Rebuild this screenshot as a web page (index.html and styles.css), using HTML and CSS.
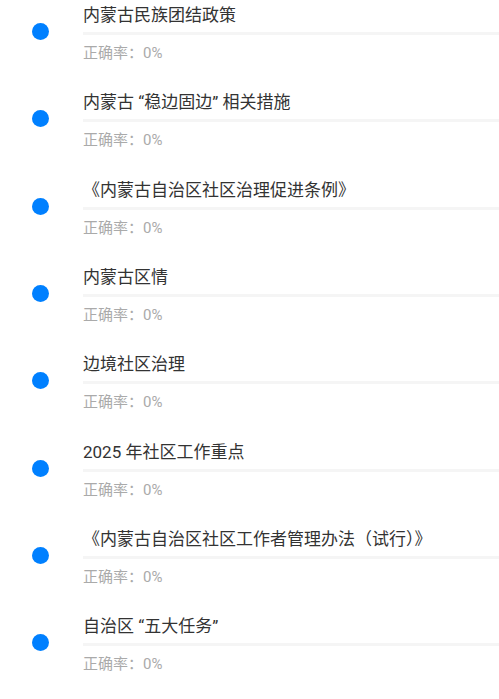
FILE: index.html
```html
<!DOCTYPE html>
<html lang="zh-CN">
<head>
    <meta charset="UTF-8">
    <meta name="viewport" content="width=device-width, initial-scale=1.0">
    <title>专项练习</title>
    <link rel="stylesheet" href="styles.css">
</head>
<body>
    <div class="list">
        <div class="item">
            <span class="dot"></span>
            <div class="info">
                <div class="title">内蒙古民族团结政策</div>
                <div class="bar"></div>
                <div class="rate">正确率：0%</div>
            </div>
        </div>
        <div class="item">
            <span class="dot"></span>
            <div class="info">
                <div class="title">内蒙古 “稳边固边” 相关措施</div>
                <div class="bar"></div>
                <div class="rate">正确率：0%</div>
            </div>
        </div>
        <div class="item">
            <span class="dot"></span>
            <div class="info">
                <div class="title">《内蒙古自治区社区治理促进条例》</div>
                <div class="bar"></div>
                <div class="rate">正确率：0%</div>
            </div>
        </div>
        <div class="item">
            <span class="dot"></span>
            <div class="info">
                <div class="title">内蒙古区情</div>
                <div class="bar"></div>
                <div class="rate">正确率：0%</div>
            </div>
        </div>
        <div class="item">
            <span class="dot"></span>
            <div class="info">
                <div class="title">边境社区治理</div>
                <div class="bar"></div>
                <div class="rate">正确率：0%</div>
            </div>
        </div>
        <div class="item">
            <span class="dot"></span>
            <div class="info">
                <div class="title">2025 年社区工作重点</div>
                <div class="bar"></div>
                <div class="rate">正确率：0%</div>
            </div>
        </div>
        <div class="item">
            <span class="dot"></span>
            <div class="info">
                <div class="title">《内蒙古自治区社区工作者管理办法（试行）》</div>
                <div class="bar"></div>
                <div class="rate">正确率：0%</div>
            </div>
        </div>
        <div class="item">
            <span class="dot"></span>
            <div class="info">
                <div class="title">自治区 “五大任务”</div>
                <div class="bar"></div>
                <div class="rate">正确率：0%</div>
            </div>
        </div>
    </div>
</body>
</html>
```
FILE: styles.css
```css
body {
    font-family: Roboto, "Noto Sans CJK SC", sans-serif;
    background-color: #fff;
    color: #333;
    margin: 0;
    padding: 0;
}
.list {
    display: flex;
    flex-direction: column;
}
.item {
    display: flex;
    align-items: flex-start;
    height: 87.33px;
}
.dot {
    flex: none;
    width: 17px;
    height: 17px;
    border-radius: 50%;
    background-color: #0080ff;
    margin: 23px 34px 0 32px;
}
.info {
    flex: 1;
    min-width: 0;
}
.title {
    font-size: 17px;
    line-height: 30px;
    color: #333;
    white-space: nowrap;
}
.bar {
    height: 3px;
    margin-top: 2px;
    background-color: #f5f5f5;
}
.rate {
    font-size: 15px;
    line-height: 37px;
    color: #aaa;
}
```
